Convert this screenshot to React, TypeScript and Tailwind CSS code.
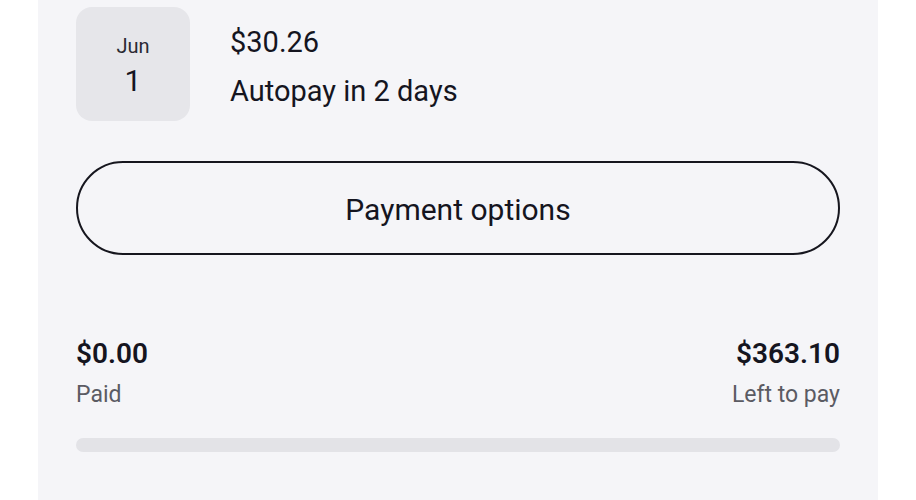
export default function App() {
  return (
    <div className="w-[916px] h-[500px] overflow-hidden bg-white font-['Roboto',sans-serif] text-[#15151f]">
      <div className="mx-[38px] -mt-[30px] h-[560px] rounded-[32px] bg-[#f5f5f8] pl-[38px] pr-[38px] pt-[37px]">
        <div className="flex gap-[40px]">
          <div className="flex h-[114px] w-[114px] flex-col items-center rounded-[16px] bg-[#e6e6ea] pt-[27px]">
            <span className="text-[20px] leading-[24px] text-[#2a2a33]">Jun</span>
            <span className="mt-[6px] text-[30px] leading-[34px]">1</span>
          </div>
          <div className="flex flex-col pt-[17px]">
            <span className="text-[29px] leading-[36px]">$30.26</span>
            <span className="mt-[13px] text-[29px] leading-[36px]">Autopay in 2 days</span>
          </div>
        </div>
        <button className="mt-[40px] flex h-[94px] w-full items-center justify-center rounded-full border-2 border-[#16161e] pt-[4px] text-[30px] leading-[36px]">
          Payment options
        </button>
        <div className="mt-[82px] flex justify-between">
          <div className="flex flex-col">
            <span className="text-[28px] font-semibold leading-[34px]">$0.00</span>
            <span className="mt-[10px] text-[23px] leading-[28px] text-[#5b5b63]">Paid</span>
          </div>
          <div className="flex flex-col items-end">
            <span className="text-[28px] font-semibold leading-[34px]">$363.10</span>
            <span className="mt-[10px] text-[23px] leading-[28px] text-[#5b5b63]">Left to pay</span>
          </div>
        </div>
        <div className="mt-[29px] h-[14px] w-full rounded-full bg-[#e3e3e7]" />
      </div>
    </div>
  );
}
